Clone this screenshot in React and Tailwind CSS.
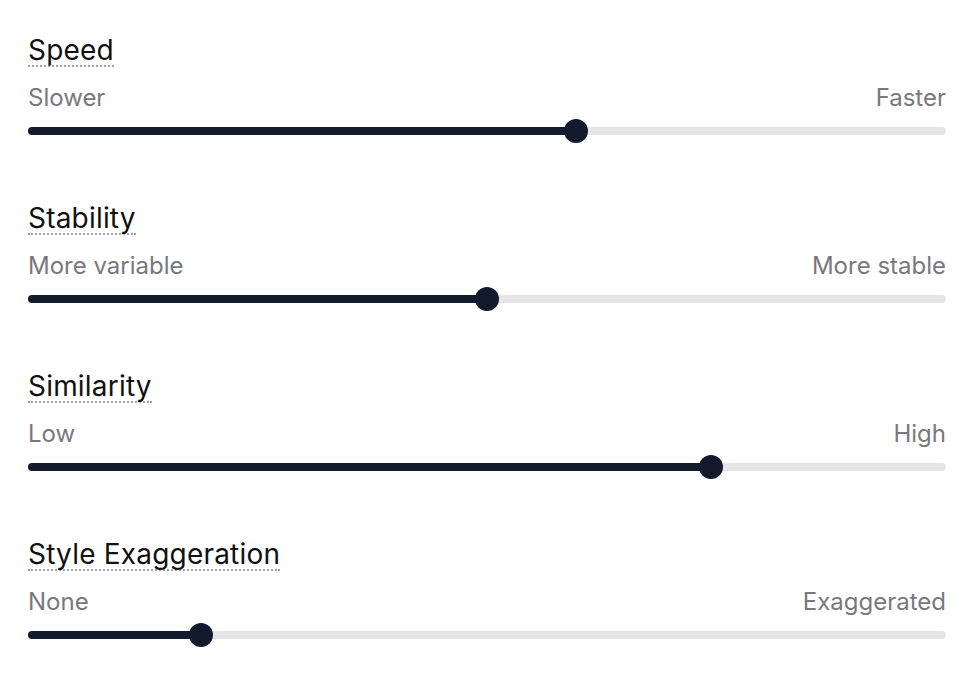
const SLIDERS = [
  { title: 'Speed', left: 'Slower', right: 'Faster', value: 0.6 },
  { title: 'Stability', left: 'More variable', right: 'More stable', value: 0.5 },
  { title: 'Similarity', left: 'Low', right: 'High', value: 0.75 },
  { title: 'Style Exaggeration', left: 'None', right: 'Exaggerated', value: 0.18 },
]

function Slider({ value }) {
  // thumb is 24px, kept inside the track like radix does
  const pos = `calc(12px + (100% - 24px) * ${value})`
  return (
    <div className="relative h-6 flex items-center">
      <div className="h-2 w-full rounded-full bg-[#e5e5e7]" />
      <div className="absolute left-0 h-2 rounded-full bg-[#131a2b]" style={{ width: pos }} />
      <div
        className="absolute h-6 w-6 -ml-3 rounded-full bg-[#131a2b]"
        style={{ left: pos }}
      />
    </div>
  )
}

export default function App() {
  return (
    <div className="min-h-screen bg-white pl-7 pr-8 pt-[36px] font-['Inter',sans-serif]">
      <div className="flex flex-col gap-[61px]">
        {SLIDERS.map((s) => (
          <div key={s.title}>
            <div className="flex">
              <span className="text-[28px] leading-[29px] tracking-[0.2px] text-[#111111] border-b-2 border-dotted border-[#a1a1aa]">
                {s.title}
              </span>
            </div>
            <div className="mt-[17px] flex justify-between text-[24px] leading-[28px] text-[#78787f]">
              <span>{s.left}</span>
              <span>{s.right}</span>
            </div>
            <div className="mt-[7px]">
              <Slider value={s.value} />
            </div>
          </div>
        ))}
      </div>
    </div>
  )
}
